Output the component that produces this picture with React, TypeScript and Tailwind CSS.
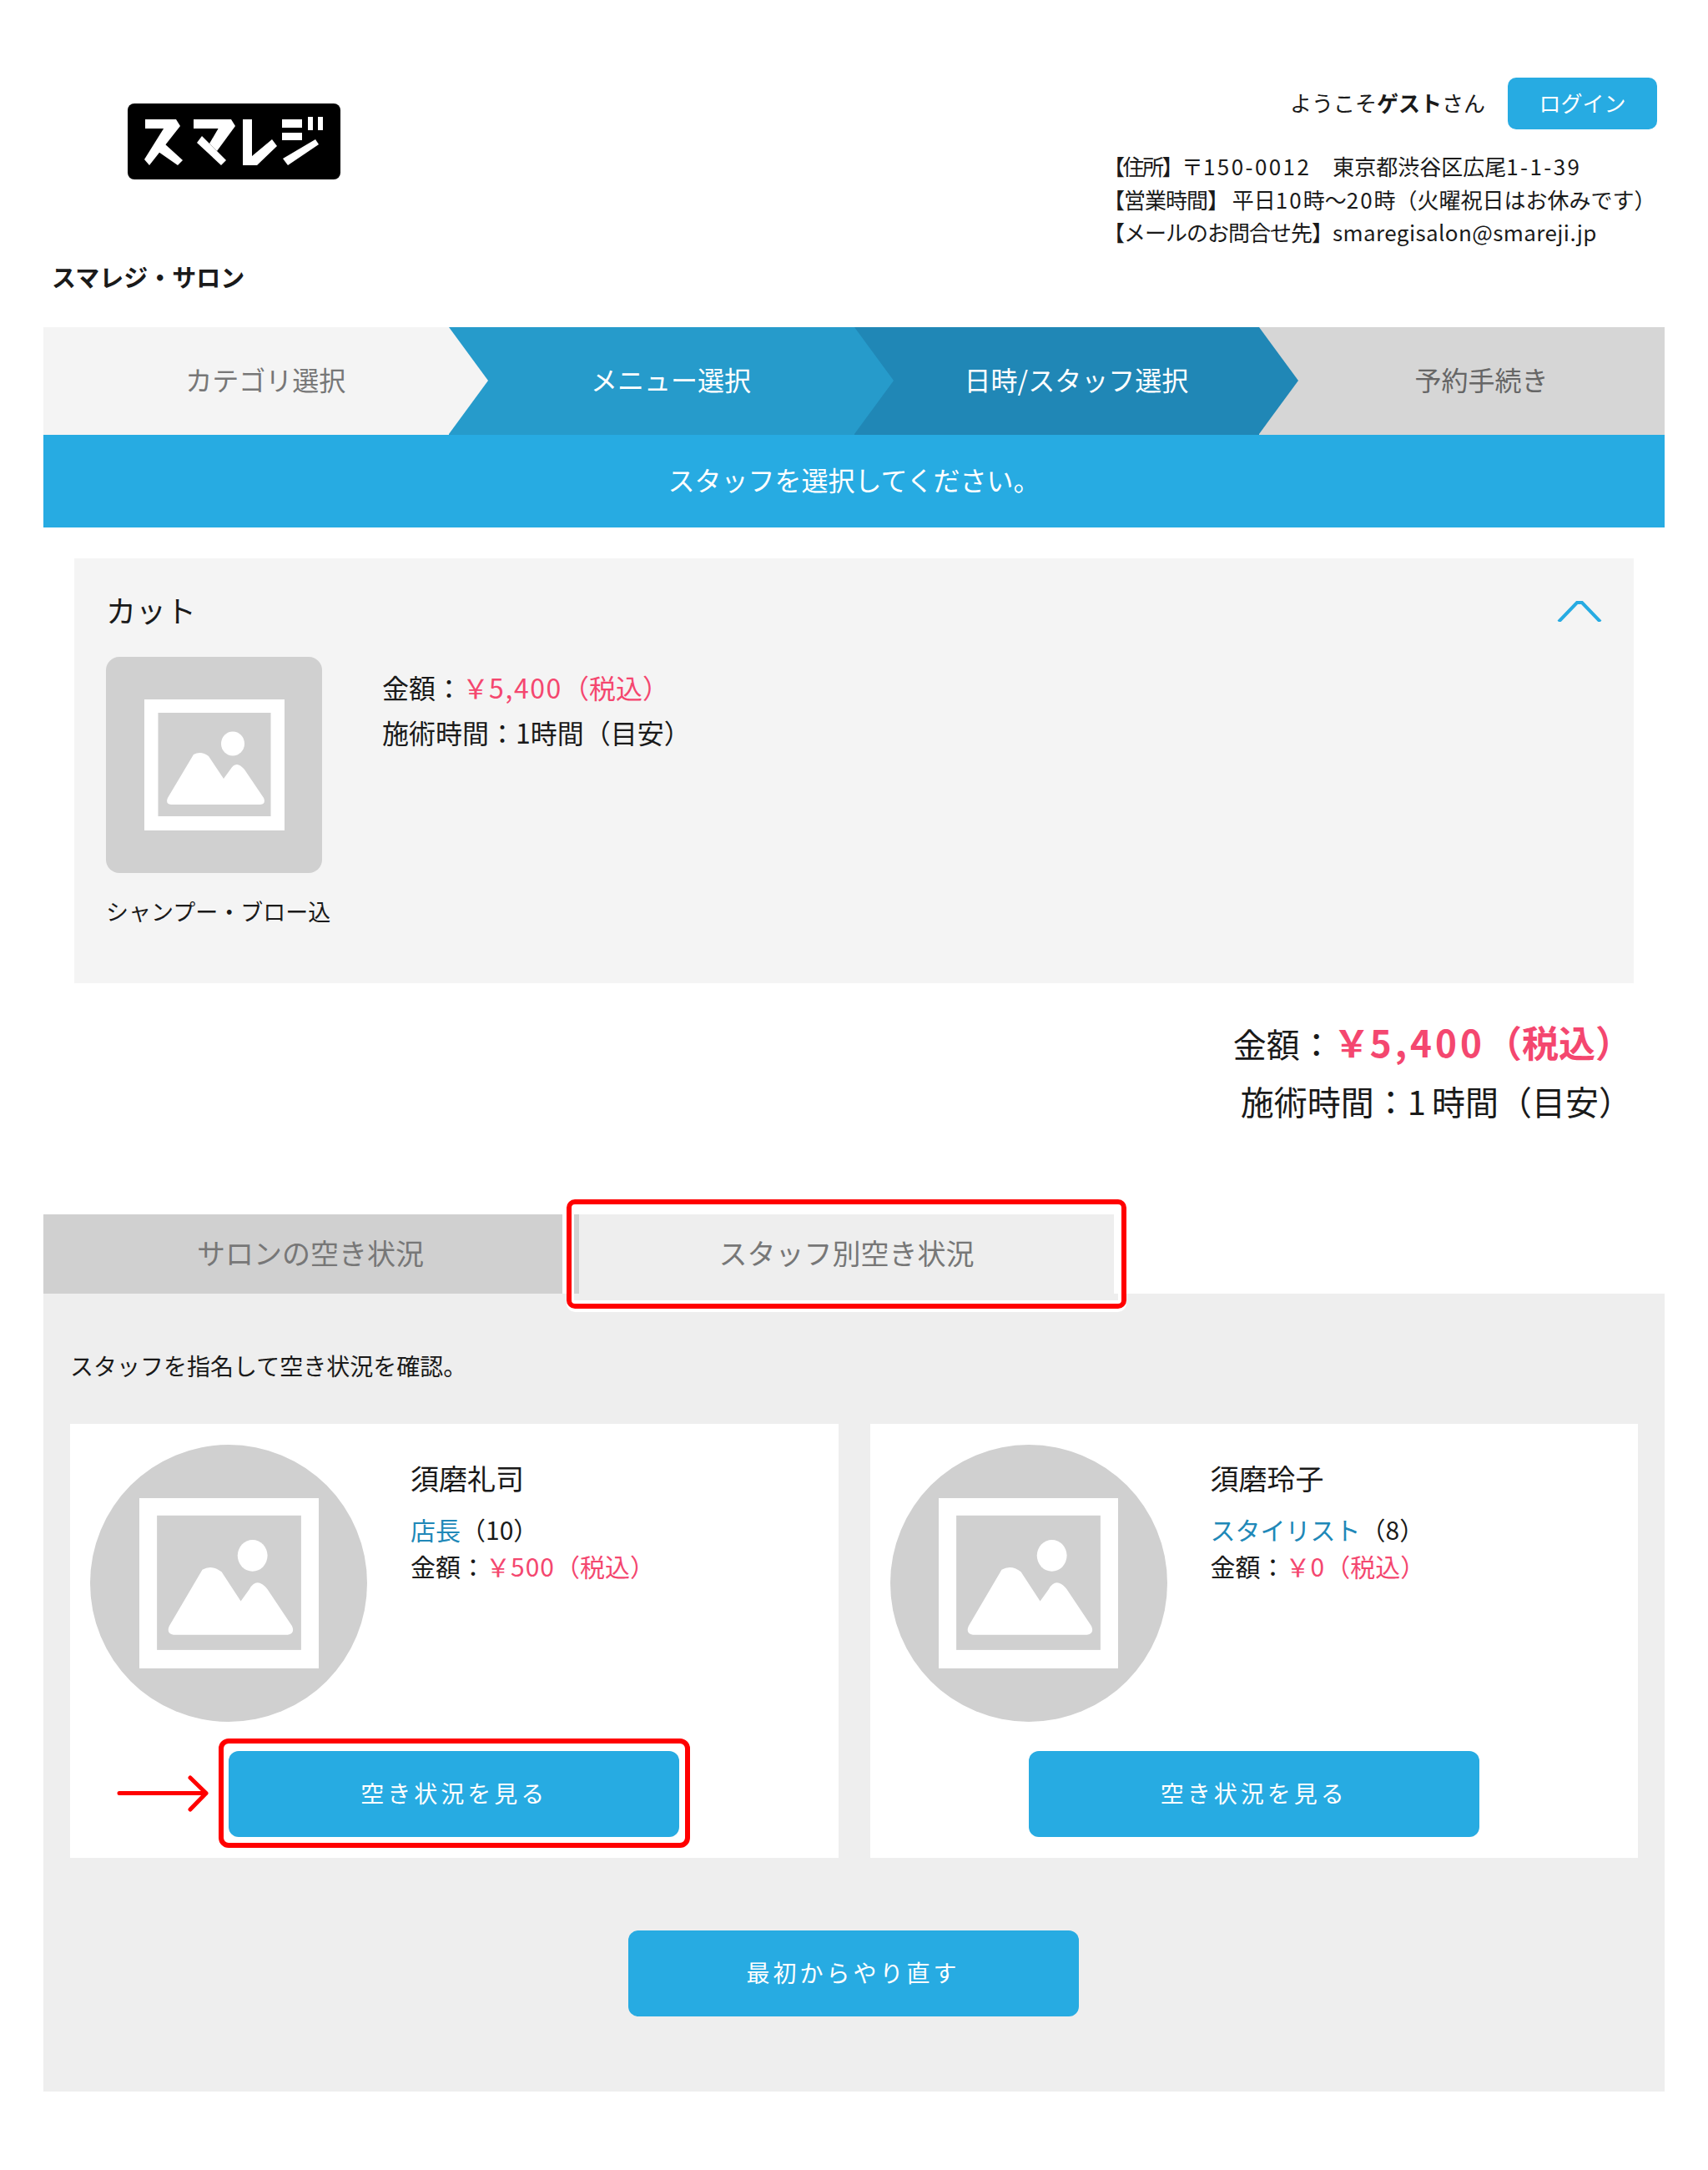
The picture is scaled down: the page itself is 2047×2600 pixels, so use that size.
const ff = "font-['Noto_Sans_CJK_JP','Noto_Sans',sans-serif]";

function PlaceholderIcon({ className }: { className: string }) {
  return (
    <svg className={className} viewBox="0 0 168 157" preserveAspectRatio="none">
      <rect width="168" height="157" fill="#fff" />
      <rect x="16.5" y="16" width="135" height="124" fill="#d0d0d0" />
      <ellipse cx="106" cy="53" rx="14" ry="14.5" fill="#fff" />
      <path
        d="M32 126 Q25 125 28 118 L59 66 Q68 61 77 68 L95 95 L103 84 Q110 72 120 84 L143 118 Q146 125 139 126 Z"
        fill="#fff"
      />
    </svg>
  );
}

function Logo() {
  return (
    <div className="w-[255px] h-[91px] bg-black rounded-[8px]">
      <svg viewBox="0 0 255 91" className="w-[255px] h-[91px]" fill="#fff">
        {/* ス */}
        <polygon points="21,19 58,19 58,30 21,30" />
        <polygon points="50,19 58,19 63,27 26,74 20,67" />
        <polygon points="37,58 44,48 66,68 60,74" />
        {/* マ */}
        <polygon points="79,19 122,19 122,30 79,30" />
        <polygon points="115,19 124,19 129,27 107,57 98,48" />
        <polygon points="83,47 89,39 118,68 112,74" />
        {/* レ */}
        <polygon points="138,19 149,19 149,63 173,43 179,51 155,74 138,74" />
        {/* ジ */}
        <polygon points="185,19 209,19 209,29 185,29" />
        <polygon points="185,35 209,35 209,44 185,44" />
        <polygon points="216,16 222,16 222,32 216,32" />
        <polygon points="228,16 234,16 234,32 228,32" />
        <polygon points="225,43 229,49 192,74 186,66" />
      </svg>
    </div>
  );
}

function Step({ label, bg, text, tip }: { label: string; bg: string; text: string; tip?: string }) {
  return (
    <div className={`relative h-[129px] pl-[47px] pb-[6px] flex items-center justify-center text-[32px] ${bg} ${text}`}>
      {label}
      {tip && (
        <div className={`absolute top-0 left-full z-10 w-0 h-0 border-y-[64.5px] border-y-transparent border-l-[47px] ${tip}`} />
      )}
    </div>
  );
}

function StaffCard({ name, role, count, price, children }: { name: string; role: string; count: string; price: string; children?: React.ReactNode }) {
  return (
    <div className="relative bg-white h-[520px] pt-[25px] px-[24px]">
      <div className="flex h-[332px]">
        <div className="w-[332px] h-[332px] rounded-full bg-[#d0d0d0] flex items-center justify-center shrink-0">
          <PlaceholderIcon className="w-[215px] h-[204px]" />
        </div>
        <div className="ml-[52px] pt-[18px]">
          <div className="text-[34px] leading-[44px]">{name}</div>
          <div className="mt-[17px] text-[30px] leading-[44px]">
            <span className="text-[#2088b8]">{role}</span>（{count}）
          </div>
          <div className="text-[30px] leading-[44px]">
            金額：<span className="text-[#f4476f]">￥<span className="tracking-[1px]">{price}</span>（税込）</span>
          </div>
        </div>
      </div>
      <div className="mt-[35px] flex justify-center">
        <button className="relative w-[540px] h-[103px] pb-[4px] rounded-[12px] bg-[#27abe2] text-white text-[28px] tracking-[4px]">
          空き状況を見る
          {children}
        </button>
      </div>
    </div>
  );
}

export default function App() {
  return (
    <div className={`w-[2047px] h-[2600px] bg-white text-[#1a1a1a] ${ff}`}>
      <header className="h-[392px] px-[52px] flex justify-between">
        <div>
          <div className="ml-[101px] mt-[124px]"><Logo /></div>
          <h1 className="ml-[10px] mt-[96px] text-[29px] leading-[40px] font-bold">スマレジ・サロン</h1>
        </div>
        <div className="pt-[93px] pr-[9px] w-[670px]">
          <div className="flex justify-end items-center gap-[27px]">
            <span className="text-[26px] -mt-[4px]">ようこそ<b className="font-bold">ゲスト</b>さん</span>
            <button className="w-[179px] h-[62px] pb-[4px] rounded-[10px] bg-[#27abe2] text-white text-[26px]">ログイン</button>
          </div>
          <div className="mt-[24px] -ml-[3px] text-[26px] leading-[39.5px] whitespace-nowrap">
            <div>
              <span className="tracking-[-2.5px]">【住所】</span>〒<span className="tracking-[2.4px]">150-0012</span>　東京都渋谷区広尾<span className="tracking-[2.4px]">1-1-39</span>
            </div>
            <div>
              <span className="tracking-[-1px]">【営業時間】 </span>平日<span className="tracking-[2px]">10</span>時～<span className="tracking-[2px]">20</span>時（火曜祝日はお休みです）
            </div>
            <div>
              <span className="tracking-[-1px]">【メールのお問合せ先】</span><span className="tracking-[0.4px]">smaregisalon@smareji.jp</span>
            </div>
          </div>
        </div>
      </header>

      <div className="mx-[52px]">
        <div className="grid grid-cols-4">
          <Step label="カテゴリ選択" bg="bg-[#f4f4f4]" text="text-[#777]" tip="border-l-[#f4f4f4]" />
          <Step label="メニュー選択" bg="bg-[#269bcb]" text="text-white" tip="border-l-[#269bcb]" />
          <Step label="日時/スタッフ選択" bg="bg-[#2087b6]" text="text-white" tip="border-l-[#2087b6]" />
          <Step label="予約手続き" bg="bg-[#d6d6d6]" text="text-[#666]" />
        </div>
        <div className="h-[111px] pb-[6px] bg-[#27abe2] text-white text-[32px] flex items-center justify-center">
          スタッフを選択してください。
        </div>
      </div>

      <section className="relative mx-[89px] mt-[37px] h-[509px] bg-[#f4f4f4] px-[38px] pt-[37px]">
        <div className="text-[36px] leading-[48px]">カット</div>
        <svg className="absolute top-[51px] right-[38px] w-[54px] h-[25px]" viewBox="0 0 54 25" fill="none" stroke="#27abe2" strokeWidth="4">
          <path d="M2 25 L24 2 H30 L52 25" />
        </svg>
        <div className="flex mt-[33px]">
          <div className="w-[259px] h-[259px] rounded-[16px] bg-[#d0d0d0] flex items-center justify-center shrink-0">
            <PlaceholderIcon className="w-[168px] h-[157px] -mt-[1px]" />
          </div>
          <div className="ml-[72px] pt-[9px] text-[32px] leading-[54px]">
            <div>金額：<span className="text-[#f4476f]">￥<span className="tracking-[1.6px]">5,400</span>（税込）</span></div>
            <div>施術時間：1時間（目安）</div>
          </div>
        </div>
        <div className="mt-[26px] text-[27px] leading-[40px]">シャンプー・ブロー込</div>
      </section>

      <div className="mx-[89px] mt-[36px] h-[241px] pr-[2px] text-right text-[40px] leading-[69px]">
        <div>金額：<span className="text-[#f4476f] text-[44px] font-bold">￥<span className="tracking-[4px]">5,400</span>（税込）</span></div>
        <div>施術時間：<span className="tracking-[7px]">1</span>時間（目安）</div>
      </div>

      <div className="relative mx-[52px]">
        <div className="flex items-end gap-[14px] text-[34px] text-[#777]">
          <div className="w-[622px] h-[95px] pl-[18px] pb-[4px] bg-[#d0d0d0] flex items-center justify-center">サロンの空き状況</div>
          <div className="relative z-10 w-[647px] h-[95px] pb-[4px] bg-[#eee] border-l-[6px] border-[#d0d0d0] flex items-center justify-center">
            スタッフ別空き状況
          </div>
        </div>
        {/* annotation drawn over the tab */}
        <div className="absolute left-[627px] top-[-18px] w-[671px] h-[131px] rounded-[10px] border-[6px] border-[#f00] bg-white shadow-[0_4px_0_#fff]" />
        <div className="absolute z-10 left-[636px] top-[95px] w-[652px] h-[8px] bg-[#eee]" />

        <div className="bg-[#eee] h-[956px] px-[32px] pt-[66px]">
          <p className="relative text-[28px] leading-[40px]">スタッフを指名して空き状況を確認。</p>
          <div className="grid grid-cols-2 gap-[38px] mt-[50px]">
            <StaffCard name="須磨礼司" role="店長" count="10" price="500">
              <span className="absolute -left-[12px] -right-[13px] -top-[15px] -bottom-[13px] rounded-[12px] border-[6px] border-[#f00]" />
              <svg className="absolute left-[-134px] top-[29px] w-[112px] h-[44px]" viewBox="0 0 112 44" fill="none" stroke="#f00" strokeWidth="5" strokeLinecap="round" strokeLinejoin="round">
                <path d="M3 21.5 H107 M88 3 L107 21.5 L88 41" />
              </svg>
            </StaffCard>
            <StaffCard name="須磨玲子" role="スタイリスト" count="8" price="0" />
          </div>
          <div className="flex justify-center mt-[87px] -ml-[2px]">
            <button className="w-[540px] h-[103px] pb-[4px] rounded-[12px] bg-[#27abe2] text-white text-[28px] tracking-[4px]">最初からやり直す</button>
          </div>
        </div>
      </div>
    </div>
  );
}
